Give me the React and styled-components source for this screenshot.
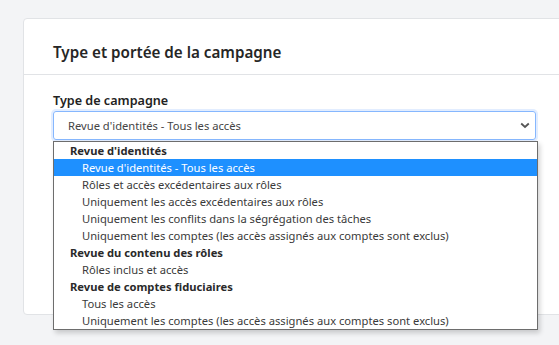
import React from "react";
import styled, { createGlobalStyle } from "styled-components";

const Global = createGlobalStyle`
  html, body { margin: 0; padding: 0; background: #f3f4f6; overflow: hidden; }
  body { font-family: "Noto Sans", "Open Sans", sans-serif; }
`;

const Page = styled.div`
  padding: 18px 0 0 23px;
  width: 559px;
  height: 345px;
  box-sizing: border-box;
  overflow: hidden;
`;

const Card = styled.section`
  width: 560px;
  background: #fff;
  border: 1px solid #e1e3e6;
  border-radius: 4px;
  box-sizing: border-box;
`;

const CardHeader = styled.header`
  height: 56px;
  box-sizing: border-box;
  display: flex;
  align-items: center;
  padding: 10px 29px 0;
  border-bottom: 1px solid #e1e3e6;
`;

const Title = styled.h2`
  margin: 0;
  font-size: 15.2px;
  font-weight: 600;
  color: #262626;
`;

const CardBody = styled.div`
  padding: 15px 0 174px 29px;
`;

const Label = styled.label`
  display: block;
  font-size: 12.6px;
  font-weight: 600;
  line-height: 21px;
  color: #222;
`;

const Field = styled.div`
  position: relative;
  width: 483px;
`;

const SelectBox = styled.div`
  height: 29px;
  box-sizing: border-box;
  border: 1px solid #86b7fe;
  border-radius: 3px;
  box-shadow: 0 0 0 2px rgba(13, 110, 253, 0.12);
  display: flex;
  align-items: center;
  justify-content: space-between;
  padding: 0 5px 0 14px;
  font-size: 11.2px;
  color: #444;
`;

const Chevron = () => (
  <svg width="10" height="7" viewBox="0 0 10 7">
    <path d="M1.2 1.5 L5 5 L8.8 1.5" fill="none" stroke="#555" strokeWidth="1.8" />
  </svg>
);

const Menu = styled.ul`
  position: absolute;
  left: 0;
  top: 30px;
  width: 485px;
  margin: 0;
  padding: 0;
  list-style: none;
  background: #fff;
  border: 1px solid #6d6d6d;
  box-shadow: 2px 3px 5px rgba(0, 0, 0, 0.18);
  box-sizing: border-box;
`;

const Row = styled.li`
  height: 17px;
  line-height: 17px;
  font-size: 11.2px;
  white-space: nowrap;
  padding-left: ${(p) => (p.$group ? "16px" : "28px")};
  font-weight: ${(p) => (p.$group ? 700 : 400)};
  color: ${(p) => (p.$active ? "#fff" : p.$group ? "#2a2a2a" : "#3a3a3a")};
  background: ${(p) => (p.$active ? "#1e90ff" : "transparent")};
`;

const groups = [
  {
    label: "Revue d'identités",
    items: [
      "Revue d'identités - Tous les accès",
      "Rôles et accès excédentaires aux rôles",
      "Uniquement les accès excédentaires aux rôles",
      "Uniquement les conflits dans la ségrégation des tâches",
      "Uniquement les comptes (les accès assignés aux comptes sont exclus)",
    ],
  },
  { label: "Revue du contenu des rôles", items: ["Rôles inclus et accès"] },
  {
    label: "Revue de comptes fiduciaires",
    items: ["Tous les accès", "Uniquement les comptes (les accès assignés aux comptes sont exclus)"],
  },
];

export default function App() {
  return (
    <>
      <Global />
      <Page>
        <Card>
          <CardHeader>
            <Title>Type et portée de la campagne</Title>
          </CardHeader>
          <CardBody>
            <Label>Type de campagne</Label>
            <Field>
              <SelectBox>
                <span>Revue d'identités - Tous les accès</span>
                <Chevron />
              </SelectBox>
              <Menu>
                {groups.map((g) => (
                  <React.Fragment key={g.label}>
                    <Row $group>{g.label}</Row>
                    {g.items.map((it, i) => (
                      <Row key={g.label + i} $active={g.label === "Revue d'identités" && i === 0}>
                        {it}
                      </Row>
                    ))}
                  </React.Fragment>
                ))}
              </Menu>
            </Field>
          </CardBody>
        </Card>
      </Page>
    </>
  );
}
